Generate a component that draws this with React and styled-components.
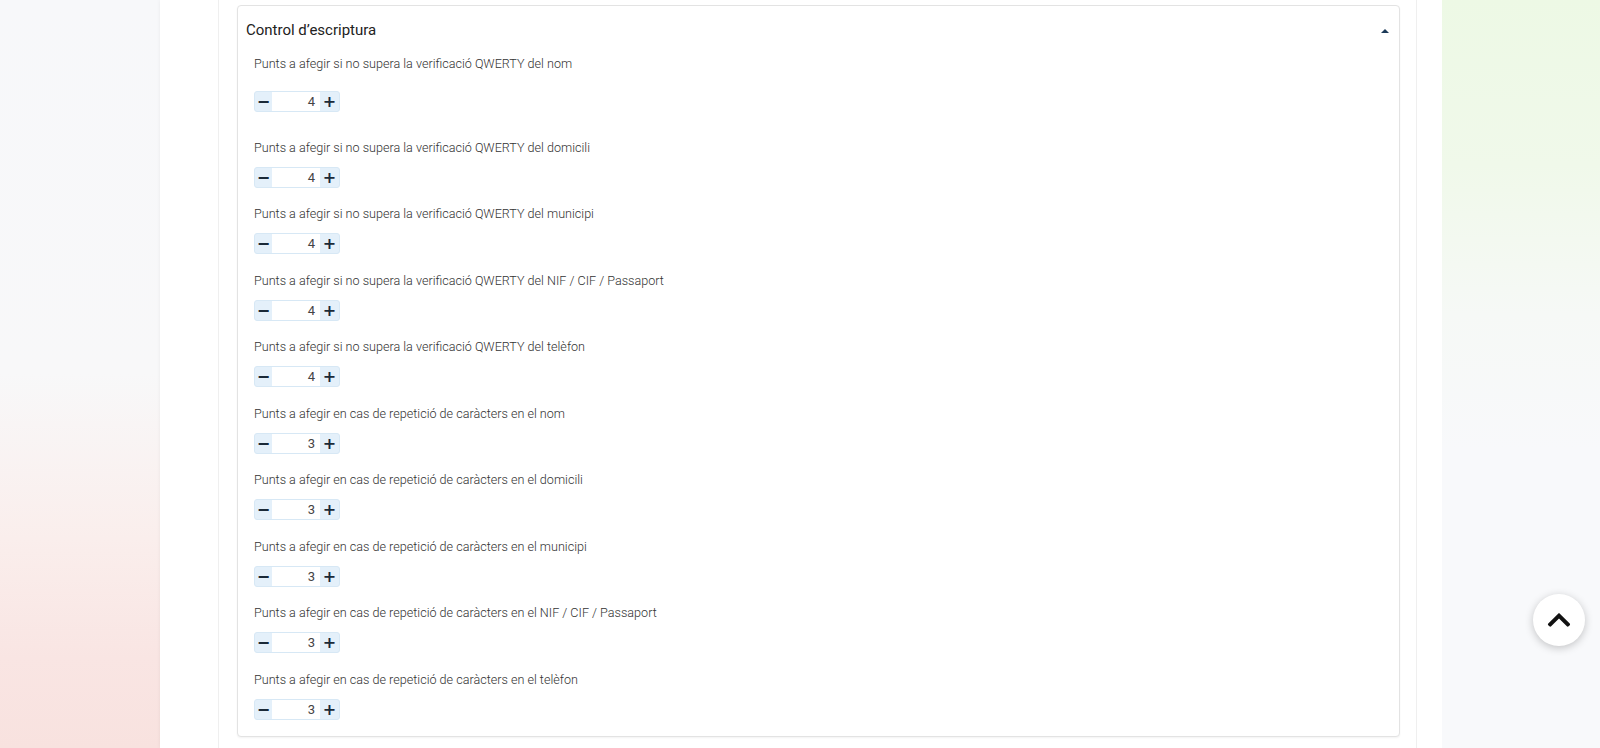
import React from 'react';
import styled, { createGlobalStyle } from 'styled-components';
import { FaChevronUp } from 'react-icons/fa';

const GlobalStyle = createGlobalStyle`
    html, body {
        margin: 0;
        padding: 0;
        background: #f8f9fb;
        font-family: Roboto, "Liberation Sans", sans-serif;
    }
`;

const Page = styled.div`
    display: flex;
    height: 748px;
    overflow: hidden;
`;

const SideBg = styled.div`
    width: ${props => props.right ? '158px' : '160px'};
    flex-shrink: 0;
    background: ${props => props.right
        ? 'linear-gradient(to bottom, #edf9e5 0%, #f0f9ea 22%, #f6f9f6 42%, #f8f9fb 60%, #f8f9fb 100%)'
        : 'linear-gradient(to bottom, #f7f8fa 0%, #f8f8f9 50%, #faeeec 72%, #f9e5e3 88%, #f8e2df 100%)'};
`;

const Panel = styled.div`
    flex: 1;
    background: #fff;
    padding: 0 25px 0 58px;
    box-shadow: 0 0 4px rgba(0, 0, 0, 0.06);
`;

const Inner = styled.div`
    height: 100%;
    border-left: 1px solid #efefef;
    border-right: 1px solid #efefef;
    padding: 5px 16px 0 18px;
`;

const Card = styled.div`
    border: 1px solid #e3e3e3;
    border-radius: 4px;
    background: #fff;
    box-shadow: 0 1px 2px rgba(0, 0, 0, 0.05);
`;

const CardHeader = styled.div`
    display: flex;
    justify-content: space-between;
    align-items: center;
    padding: 15px 10px 15px 8px;
`;

const Title = styled.h3`
    margin: 0;
    font-size: 15px;
    line-height: 19px;
    font-weight: 400;
    color: #222;
`;

const Caret = styled.span`
    width: 0;
    height: 0;
    border-left: 4px solid transparent;
    border-right: 4px solid transparent;
    border-bottom: 4px solid #1c3a58;
`;

const CardBody = styled.div`
    padding: 0 17px 16px 16px;
`;

const Field = styled.div`
    margin-bottom: ${props => props.last ? '0' : props.first ? '26.5px' : '17.5px'};
`;

const Label = styled.div`
    font-size: 12.6px;
    line-height: 18px;
    font-weight: 300;
    color: #333;
    margin-bottom: ${props => props.first ? '18px' : '10px'};
`;

const Stepper = styled.div`
    display: inline-flex;
    height: 21px;
    border: 1px solid #d7e8f5;
    border-radius: 3px;
    background: #e4f0fa;
    box-sizing: border-box;
`;

const StepButton = styled.span`
    width: ${props => props.plus ? '19px' : '17px'};
    display: flex;
    align-items: center;
    justify-content: center;
    font-size: 16px;
    font-weight: 700;
    color: #1b2a38;
    font-family: "DejaVu Sans", sans-serif;
`;

const Value = styled.span`
    width: 48px;
    background: #fff;
    text-align: right;
    padding-right: 5px;
    box-sizing: border-box;
    font-size: 13px;
    line-height: 19px;
    color: #444;
`;

const ScrollTop = styled.button`
    position: fixed;
    left: 1533px;
    top: 594px;
    width: 52px;
    height: 52px;
    border-radius: 50%;
    border: none;
    background: #fff;
    box-shadow: 0 2px 8px rgba(0, 0, 0, 0.22);
    display: flex;
    align-items: center;
    justify-content: center;
    color: #111;
    padding: 0;
`;

const fields = [
    ['Punts a afegir si no supera la verificació QWERTY del nom', 4],
    ['Punts a afegir si no supera la verificació QWERTY del domicili', 4],
    ['Punts a afegir si no supera la verificació QWERTY del municipi', 4],
    ['Punts a afegir si no supera la verificació QWERTY del NIF / CIF / Passaport', 4],
    ['Punts a afegir si no supera la verificació QWERTY del telèfon', 4],
    ['Punts a afegir en cas de repetició de caràcters en el nom', 3],
    ['Punts a afegir en cas de repetició de caràcters en el domicili', 3],
    ['Punts a afegir en cas de repetició de caràcters en el municipi', 3],
    ['Punts a afegir en cas de repetició de caràcters en el NIF / CIF / Passaport', 3],
    ['Punts a afegir en cas de repetició de caràcters en el telèfon', 3],
];

const App = () => {
    return (
        <>
            <GlobalStyle />
            <Page>
                <SideBg />
                <Panel>
                    <Inner>
                        <Card>
                            <CardHeader>
                                <Title>Control d’escriptura</Title>
                                <Caret />
                            </CardHeader>
                            <CardBody>
                                {fields.map(([label, value], i) => (
                                    <Field key={i} first={i === 0} last={i === fields.length - 1}>
                                        <Label first={i === 0}>{label}</Label>
                                        <Stepper>
                                            <StepButton>−</StepButton>
                                            <Value>{value}</Value>
                                            <StepButton plus>+</StepButton>
                                        </Stepper>
                                    </Field>
                                ))}
                            </CardBody>
                        </Card>
                    </Inner>
                </Panel>
                <SideBg right />
            </Page>
            <ScrollTop>
                <FaChevronUp size={26} />
            </ScrollTop>
        </>
    );
};

export default App;
